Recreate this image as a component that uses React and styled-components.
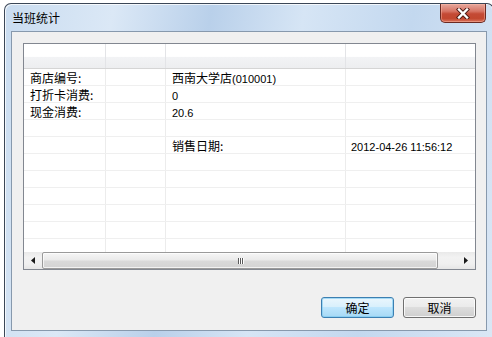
import React from "react";
import styled, { createGlobalStyle } from "styled-components";

const Global = createGlobalStyle`
  html, body { margin: 0; padding: 0; background: #ffffff; overflow: hidden; }
  body { width: 492px; height: 337px; font-family: "Liberation Sans", "Noto Sans CJK SC", sans-serif; }
  * { box-sizing: border-box; }
`;

const Page = styled.div`
  width: 492px;
  height: 337px;
  padding: 3px 0 0 4px;
  overflow: hidden;
`;

const Window = styled.div`
  width: 490px;
  height: 334px;
  border: 1px solid #3b4757;
  border-bottom: none;
  border-radius: 7px 7px 0 0;
  background: linear-gradient(100deg, #c9dcf0 0%, #dbe8f6 20%, #b9d0ea 38%, #d6e5f5 55%, #c3d8ef 75%, #dae7f5 100%);
  box-shadow: inset 1px 1px 0 rgba(255, 255, 255, 0.75), inset -1px 0 0 rgba(255, 255, 255, 0.6);
  padding: 0 6px 5px 6px;
  display: flex;
  flex-direction: column;
`;

const TitleBar = styled.div`
  height: 27px;
  display: flex;
  align-items: center;
  justify-content: space-between;
  padding-left: 1px;
`;

const Title = styled.span`
  font-family: "Noto Sans CJK SC", sans-serif;
  font-size: 12px;
  color: #000;
  line-height: 14px;
  margin-top: 1px;
`;

const CloseButton = styled.div`
  align-self: flex-start;
  width: 46px;
  height: 19px;
  margin-right: 1px;
  border: 1px solid #6b2a22;
  border-top: none;
  border-radius: 0 0 5px 5px;
  background: linear-gradient(#e6a89d 0%, #d77565 40%, #c44a35 55%, #c2472f 80%, #d9735d 100%);
  box-shadow: inset 0 0 0 1px rgba(255, 190, 170, 0.45);
  display: flex;
  align-items: center;
  justify-content: center;
`;

const Client = styled.div`
  height: 300px;
  border: 1px solid #8799ad;
  background: #f0f0f0;
  padding: 11px 10px 12px 11px;
  display: flex;
  flex-direction: column;
`;

const ListView = styled.div`
  height: 227px;
  border: 1px solid #828790;
  background: #ffffff;
  display: flex;
  flex-direction: column;
  overflow: hidden;
`;

const COLS = "82px 60px 180px 129px";

const HeaderRow = styled.div`
  height: 25px;
  flex: none;
  display: grid;
  grid-template-columns: ${COLS};
  border-bottom: 1px solid #d5d5d5;
  background: linear-gradient(#ffffff 0%, #ffffff 52%, #f2f3f5 53%, #edeef0 100%);
`;

const HeaderCell = styled.div`
  border-right: ${(p) => (p.$last ? "none" : "1px solid #e3e4e7")};
`;

const Body = styled.div`
  flex: 1;
  overflow: hidden;
`;

const Row = styled.div`
  height: 17px;
  display: grid;
  grid-template-columns: ${COLS};
  border-bottom: 1px solid #efefef;
`;

const Cell = styled.div`
  border-right: ${(p) => (p.$last ? "none" : "1px solid #ececec")};
  padding-left: ${(p) => p.$pad || 6}px;
  font-family: "Noto Sans CJK SC", sans-serif;
  font-size: 12px;
  line-height: 16px;
  height: 16px;
  color: #000;
  white-space: nowrap;
  padding-top: 1px;
`;

const Latin = styled.span`
  font-family: "Liberation Sans", sans-serif;
  font-size: 11px;
`;

const ScrollBar = styled.div`
  height: 17px;
  flex: none;
  display: flex;
  background: linear-gradient(#e9e9e9, #f2f2f2 30%, #f0f0f0 70%, #e6e6e6);
`;

const ArrowButton = styled.div`
  width: ${(p) => p.$w}px;
  flex: none;
  display: flex;
  align-items: center;
  justify-content: center;
`;

const Thumb = styled.div`
  width: 396px;
  flex: none;
  border: 1px solid #9a9a9a;
  border-radius: 2px;
  background: linear-gradient(#f6f6f6 0%, #eaeaea 45%, #d9d9d9 55%, #d3d3d3 100%);
  box-shadow: inset 0 0 0 1px rgba(255, 255, 255, 0.7);
  display: flex;
  align-items: center;
  justify-content: center;
`;

const Track = styled.div`
  width: ${(p) => p.$w}px;
  flex: none;
`;

const Grip = styled.div`
  display: flex;
  gap: 1px;
`;

const GripLine = styled.div`
  width: 1px;
  height: 6px;
  background: #5a5a5a;
  box-shadow: 1px 0 0 #ffffff;
`;

const ButtonRow = styled.div`
  margin-top: 27px;
  display: flex;
  justify-content: flex-end;
  gap: 9px;
`;

const Button = styled.div`
  width: 73px;
  height: 21px;
  border-radius: 3px;
  border: 1px solid ${(p) => (p.$default ? "#3c7fb1" : "#707070")};
  background: ${(p) =>
    p.$default
      ? "linear-gradient(#eaf6fd 0%, #d9f0fc 45%, #bee6fd 50%, #a7d9f5 100%)"
      : "linear-gradient(#f2f2f2 0%, #ebebeb 45%, #dddddd 50%, #cfcfcf 100%)"};
  box-shadow: inset 0 0 0 1px ${(p) => (p.$default ? "rgba(120, 200, 240, 0.6)" : "rgba(255, 255, 255, 0.8)")};
  display: flex;
  align-items: center;
  justify-content: center;
  font-family: "Noto Sans CJK SC", sans-serif;
  font-size: 12px;
  color: #000;
`;

const rows = [
  ["商店编号:", "", <>西南大学店<Latin>(010001)</Latin></>, ""],
  ["打折卡消费:", "", <Latin>0</Latin>, ""],
  ["现金消费:", "", <Latin>20.6</Latin>, ""],
  ["", "", "", ""],
  ["", "", "销售日期:", <Latin>2012-04-26 11:56:12</Latin>],
  ["", "", "", ""],
  ["", "", "", ""],
  ["", "", "", ""],
  ["", "", "", ""],
  ["", "", "", ""],
  ["", "", "", ""],
];

export default function App() {
  return (
    <>
      <Global />
      <Page>
        <Window>
          <TitleBar>
            <Title>当班统计</Title>
            <CloseButton>
              <svg width="14" height="11" viewBox="0 0 14 11">
                <path d="M3 1.5 L11 9.5 M11 1.5 L3 9.5" stroke="#4a1a14" strokeWidth="4.2" strokeLinecap="square" />
                <path d="M3 1.5 L11 9.5 M11 1.5 L3 9.5" stroke="#ffffff" strokeWidth="2.4" strokeLinecap="square" />
              </svg>
            </CloseButton>
          </TitleBar>
          <Client>
            <ListView>
              <HeaderRow>
                <HeaderCell />
                <HeaderCell />
                <HeaderCell />
                <HeaderCell $last />
              </HeaderRow>
              <Body>
                {rows.map((r, i) => (
                  <Row key={i}>
                    <Cell>{r[0]}</Cell>
                    <Cell>{r[1]}</Cell>
                    <Cell>{r[2]}</Cell>
                    <Cell $last $pad={5}>{r[3]}</Cell>
                  </Row>
                ))}
              </Body>
              <ScrollBar>
                <ArrowButton $w={18}>
                  <svg width="4" height="7" viewBox="0 0 4 7">
                    <path d="M4 0 L0 3.5 L4 7 Z" fill="#1a1a1a" />
                  </svg>
                </ArrowButton>
                <Thumb>
                  <Grip>
                    <GripLine />
                    <GripLine />
                    <GripLine />
                  </Grip>
                </Thumb>
                <Track $w={19} />
                <ArrowButton $w={18}>
                  <svg width="4" height="7" viewBox="0 0 4 7">
                    <path d="M0 0 L4 3.5 L0 7 Z" fill="#1a1a1a" />
                  </svg>
                </ArrowButton>
              </ScrollBar>
            </ListView>
            <ButtonRow>
              <Button $default>确定</Button>
              <Button>取消</Button>
            </ButtonRow>
          </Client>
        </Window>
      </Page>
    </>
  );
}
